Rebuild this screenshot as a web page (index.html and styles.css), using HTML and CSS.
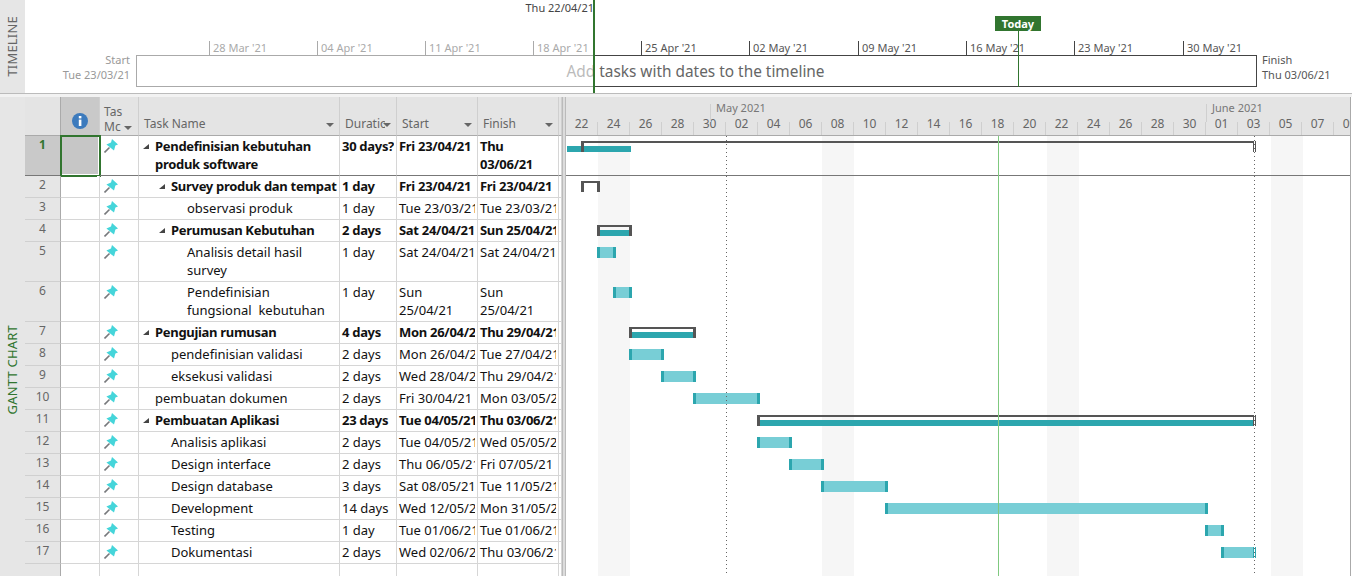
FILE: index.html
```html
<!DOCTYPE html>
<html lang="en">
<head>
    <meta charset="UTF-8">
    <meta name="viewport" content="width=device-width, initial-scale=1.0">
    <title>Gantt Chart</title>
    <link rel="stylesheet" href="styles.css">
</head>
<body>
    <svg class="defs" width="0" height="0">
        <symbol id="pin" viewBox="0 0 14 14">
            <path d="M0.5 13.5 L5.5 8.5" stroke="#77797c" stroke-width="1.6" fill="none"/>
            <path d="M8 0 L14 5.4 L11.4 6.6 L10 11.6 L2.4 5.6 L7 3.6 Z" fill="#45d5da"/>
        </symbol>
    </svg>

    <div class="app">
        <section class="timeline">
            <div class="side-label"><span>TIMELINE</span></div>
            <div class="timeline-view">
                <div class="timeline-row">
                    <div class="range-label start">Start<br>Tue 23/03/21</div>
                    <div class="timeline-box">
                        <span class="hint"><span class="hint-past">Add</span> tasks with dates to the timeline</span>
                    </div>
                    <div class="range-label">Finish<br>Thu 03/06/21</div>
                </div>

                <span class="tick past" style="left:184px">28 Mar '21</span>
                <span class="tick past" style="left:292px">04 Apr '21</span>
                <span class="tick past" style="left:400px">11 Apr '21</span>
                <span class="tick past" style="left:508px">18 Apr '21</span>
                <span class="tick" style="left:616px">25 Apr '21</span>
                <span class="tick" style="left:724px">02 May '21</span>
                <span class="tick" style="left:833px">09 May '21</span>
                <span class="tick" style="left:941px">16 May '21</span>
                <span class="tick" style="left:1049px">23 May '21</span>
                <span class="tick" style="left:1158px">30 May '21</span>

                <div class="past-box"></div>
                <div class="current-line"></div>
                <span class="current-date">Thu 22/04/21</span>
                <div class="today-line"></div>
                <span class="today-flag">Today</span>
            </div>
        </section>

        <div class="divider"></div>

        <section class="gantt">
            <div class="side-label green"><span>GANTT CHART</span></div>

            <table class="sheet">
                <colgroup>
                    <col class="c-num"><col class="c-ind"><col class="c-mode"><col class="c-name">
                    <col class="c-dur"><col class="c-date"><col class="c-date"><col class="c-pad">
                </colgroup>
                <thead>
                    <tr>
                        <th class="num"></th>
                        <th class="ind">
                            <svg class="info" width="16" height="16" viewBox="0 0 16 16">
                                <circle cx="8" cy="8" r="8" fill="#3d7bbd"/>
                                <rect x="6.8" y="3" width="2.6" height="2.4" fill="#fff"/>
                                <rect x="6.8" y="6.6" width="2.6" height="6.4" fill="#fff"/>
                            </svg>
                        </th>
                        <th class="mode">Tas<br><span class="with-arrow">Mc</span></th>
                        <th class="drop">Task Name</th>
                        <th class="drop short"><span class="clip">Duration</span></th>
                        <th class="drop">Start</th>
                        <th class="drop">Finish</th>
                        <th></th>
                    </tr>
                </thead>
                <tbody>
                    <tr class="tall selected">
                        <td class="num">1</td><td class="active"></td><td><svg class="pin"><use href="#pin"/></svg></td>
                        <td class="name l1 sum">Pendefinisian kebutuhan<br>produk software</td>
                        <td class="b">30 days?</td><td class="b">Fri 23/04/21</td><td class="b">Thu<br>03/06/21</td><td></td>
                    </tr>
                    <tr>
                        <td class="num">2</td><td></td><td><svg class="pin"><use href="#pin"/></svg></td>
                        <td class="name l2 sum">Survey produk dan tempat</td>
                        <td class="b">1 day</td><td class="b">Fri 23/04/21</td><td class="b">Fri 23/04/21</td><td></td>
                    </tr>
                    <tr>
                        <td class="num">3</td><td></td><td><svg class="pin"><use href="#pin"/></svg></td>
                        <td class="name l3">observasi produk</td>
                        <td>1 day</td><td>Tue 23/03/21</td><td>Tue 23/03/21</td><td></td>
                    </tr>
                    <tr>
                        <td class="num">4</td><td></td><td><svg class="pin"><use href="#pin"/></svg></td>
                        <td class="name l2 sum">Perumusan Kebutuhan</td>
                        <td class="b">2 days</td><td class="b">Sat 24/04/21</td><td class="b">Sun 25/04/21</td><td></td>
                    </tr>
                    <tr class="tall">
                        <td class="num">5</td><td></td><td><svg class="pin"><use href="#pin"/></svg></td>
                        <td class="name l3">Analisis detail hasil<br>survey</td>
                        <td>1 day</td><td>Sat 24/04/21</td><td>Sat 24/04/21</td><td></td>
                    </tr>
                    <tr class="tall">
                        <td class="num">6</td><td></td><td><svg class="pin"><use href="#pin"/></svg></td>
                        <td class="name l3">Pendefinisian<br>fungsional&nbsp; kebutuhan</td>
                        <td>1 day</td><td>Sun<br>25/04/21</td><td>Sun<br>25/04/21</td><td></td>
                    </tr>
                    <tr>
                        <td class="num">7</td><td></td><td><svg class="pin"><use href="#pin"/></svg></td>
                        <td class="name l1 sum">Pengujian rumusan</td>
                        <td class="b">4 days</td><td class="b">Mon 26/04/21</td><td class="b">Thu 29/04/21</td><td></td>
                    </tr>
                    <tr>
                        <td class="num">8</td><td></td><td><svg class="pin"><use href="#pin"/></svg></td>
                        <td class="name l2">pendefinisian validasi</td>
                        <td>2 days</td><td>Mon 26/04/21</td><td>Tue 27/04/21</td><td></td>
                    </tr>
                    <tr>
                        <td class="num">9</td><td></td><td><svg class="pin"><use href="#pin"/></svg></td>
                        <td class="name l2">eksekusi validasi</td>
                        <td>2 days</td><td>Wed 28/04/21</td><td>Thu 29/04/21</td><td></td>
                    </tr>
                    <tr>
                        <td class="num">10</td><td></td><td><svg class="pin"><use href="#pin"/></svg></td>
                        <td class="name l1">pembuatan dokumen</td>
                        <td>2 days</td><td>Fri 30/04/21</td><td>Mon 03/05/21</td><td></td>
                    </tr>
                    <tr>
                        <td class="num">11</td><td></td><td><svg class="pin"><use href="#pin"/></svg></td>
                        <td class="name l1 sum">Pembuatan Aplikasi</td>
                        <td class="b">23 days</td><td class="b">Tue 04/05/21</td><td class="b">Thu 03/06/21</td><td></td>
                    </tr>
                    <tr>
                        <td class="num">12</td><td></td><td><svg class="pin"><use href="#pin"/></svg></td>
                        <td class="name l2">Analisis aplikasi</td>
                        <td>2 days</td><td>Tue 04/05/21</td><td>Wed 05/05/21</td><td></td>
                    </tr>
                    <tr>
                        <td class="num">13</td><td></td><td><svg class="pin"><use href="#pin"/></svg></td>
                        <td class="name l2">Design interface</td>
                        <td>2 days</td><td>Thu 06/05/21</td><td>Fri 07/05/21</td><td></td>
                    </tr>
                    <tr>
                        <td class="num">14</td><td></td><td><svg class="pin"><use href="#pin"/></svg></td>
                        <td class="name l2">Design database</td>
                        <td>3 days</td><td>Sat 08/05/21</td><td>Tue 11/05/21</td><td></td>
                    </tr>
                    <tr>
                        <td class="num">15</td><td></td><td><svg class="pin"><use href="#pin"/></svg></td>
                        <td class="name l2">Development</td>
                        <td>14 days</td><td>Wed 12/05/21</td><td>Mon 31/05/21</td><td></td>
                    </tr>
                    <tr>
                        <td class="num">16</td><td></td><td><svg class="pin"><use href="#pin"/></svg></td>
                        <td class="name l2">Testing</td>
                        <td>1 day</td><td>Tue 01/06/21</td><td>Tue 01/06/21</td><td></td>
                    </tr>
                    <tr>
                        <td class="num">17</td><td></td><td><svg class="pin"><use href="#pin"/></svg></td>
                        <td class="name l2">Dokumentasi</td>
                        <td>2 days</td><td>Wed 02/06/21</td><td>Thu 03/06/21</td><td></td>
                    </tr>
                    <tr>
                        <td class="num"></td><td></td><td></td><td></td><td></td><td></td><td></td><td></td>
                    </tr>
                </tbody>
            </table>

            <div class="splitter"></div>

            <div class="chart">
                <div class="chart-head">
                    <div class="months">
                        <span class="month" style="left:144px">May 2021</span>
                        <span class="month" style="left:640px">June 2021</span>
                    </div>
                    <div class="days">
                        <span>22</span><span>24</span><span>26</span><span>28</span><span>30</span>
                        <span>02</span><span>04</span><span>06</span><span>08</span><span>10</span>
                        <span>12</span><span>14</span><span>16</span><span>18</span><span>20</span>
                        <span>22</span><span>24</span><span>26</span><span>28</span><span>30</span>
                        <span>01</span><span>03</span><span>05</span><span>07</span><span>09</span>
                    </div>
                </div>

                <div class="chart-body">
                    <div class="weekend" style="left:32px"></div>
                    <div class="weekend" style="left:256px"></div>
                    <div class="weekend" style="left:481px"></div>
                    <div class="weekend" style="left:705px"></div>
                    <div class="row-line"></div>

                    <!-- left/top/width are px from the dates and row heights -->
                    <div class="rollup" style="left:1px;top:10px;width:64px"></div>
                    <div class="bracket" style="left:15px;top:5px;width:675px"></div>
                    <div class="bracket" style="left:15px;top:45px;width:19px"></div>
                    <div class="bracket filled" style="left:31px;top:89px;width:35px"></div>
                    <div class="bar" style="left:31px;top:111px;width:19px"></div>
                    <div class="bar" style="left:47px;top:151px;width:19px"></div>
                    <div class="bracket filled" style="left:63px;top:191px;width:67px"></div>
                    <div class="bar" style="left:63px;top:213px;width:35px"></div>
                    <div class="bar" style="left:95px;top:235px;width:35px"></div>
                    <div class="bar" style="left:127px;top:257px;width:67px"></div>
                    <div class="bracket filled" style="left:191px;top:279px;width:499px"></div>
                    <div class="bar" style="left:191px;top:301px;width:35px"></div>
                    <div class="bar" style="left:223px;top:323px;width:35px"></div>
                    <div class="bar" style="left:255px;top:345px;width:67px"></div>
                    <div class="bar" style="left:319px;top:367px;width:323px"></div>
                    <div class="bar" style="left:639px;top:389px;width:19px"></div>
                    <div class="bar" style="left:655px;top:411px;width:35px"></div>

                    <div class="cut" style="top:5px"></div>
                    <div class="cut" style="top:279px"></div>
                    <div class="cut" style="top:411px"></div>

                    <div class="dotted" style="left:160px"></div>
                    <div class="dotted" style="left:688px"></div>
                    <div class="today-mark"></div>
                </div>
            </div>
        </section>
    </div>
</body>
</html>
```

FILE: styles.css
```css
* {
    box-sizing: border-box;
}

body {
    margin: 0;
    font-family: "Noto Sans", Arial, sans-serif;
    font-size: 13px;
    color: #111;
    background: #fff;
}

.defs {
    position: absolute;
}

.app {
    width: 1352px;
    height: 576px;
    overflow: hidden;
}

/* side labels */
.side-label {
    flex: none;
    width: 25px;
    background: #e6e6e6;
    color: #666;
    display: flex;
    align-items: center;
    justify-content: center;
}

.side-label span {
    writing-mode: vertical-rl;
    transform: rotate(180deg);
    font-size: 13px;
    line-height: 25px;
    letter-spacing: 0.2px;
}

.side-label.green {
    color: #31752f;
    padding-top: 67px;
}

/* timeline */
.timeline {
    display: flex;
    height: 93px;
}

.timeline-view {
    position: relative;
    flex: 1;
    min-width: 0;
    padding-top: 55px;
}

.timeline-row {
    display: flex;
    align-items: stretch;
    height: 32px;
}

.range-label {
    flex: none;
    width: 90px;
    margin: -3px 0 0 5px;
    font-size: 11px;
    line-height: 15px;
    color: #555;
    white-space: nowrap;
}

.range-label.start {
    width: 105px;
    margin: -3px 6px 0 0;
    text-align: right;
    color: #999;
}

.timeline-box {
    flex: none;
    width: 1121px;
    border: 1px solid #444;
    display: flex;
    align-items: center;
    justify-content: center;
    font-size: 15.4px;
    color: #666;
}

.hint {
    margin-left: -2px;
}

.hint-past {
    color: #bbb;
}

.past-box {
    position: absolute;
    left: 111px;
    top: 55px;
    width: 458px;
    height: 32px;
    border: 1px solid #aaa;
    border-right: 0;
}

.tick {
    position: absolute;
    top: 41px;
    height: 14px;
    border-left: 1px solid #444;
    padding-left: 3px;
    font-size: 11px;
    line-height: 13px;
    color: #555;
    white-space: nowrap;
}

.tick.past {
    border-left-color: #aaa;
    color: #aaa;
}

.current-line {
    position: absolute;
    left: 568px;
    top: 0;
    width: 2px;
    height: 93px;
    background: #31752f;
}

.current-date {
    position: absolute;
    right: 758px;
    top: 0;
    font-size: 11px;
    line-height: 16px;
    color: #444;
    white-space: nowrap;
}

.today-line {
    position: absolute;
    left: 993px;
    top: 31px;
    width: 1px;
    height: 56px;
    background: #31752f;
}

.today-flag {
    position: absolute;
    left: 970px;
    top: 16px;
    width: 46px;
    height: 15px;
    background: #31752f;
    color: #fff;
    font-size: 11px;
    font-weight: bold;
    line-height: 15px;
    text-align: center;
}

.divider {
    height: 4px;
    border-top: 1px solid #bbb;
    background: #f2f2f2;
}

/* gantt view */
.gantt {
    display: flex;
    height: 479px;
}

.sheet {
    flex: none;
    width: 537px;
    table-layout: fixed;
    border-collapse: separate;
    border-spacing: 0;
    align-self: flex-start;
}

.c-num { width: 36px; }
.c-ind { width: 39px; }
.c-mode { width: 39px; }
.c-name { width: 201px; }
.c-dur { width: 57px; }
.c-date { width: 81px; }
.c-pad { width: 3px; }

.sheet th {
    height: 39px;
    padding: 0 5px 2px;
    background: #e4e4e4;
    border-right: 1px solid #cfcfcf;
    border-bottom: 1px solid #aaa;
    font-size: 12px;
    font-weight: normal;
    line-height: 18px;
    color: #666;
    text-align: left;
    vertical-align: bottom;
    white-space: nowrap;
    overflow: hidden;
    position: relative;
}

.sheet th.num {
    border-right-color: #aaa;
    border-bottom-color: #aaa;
}

.sheet th.ind {
    background: #c9c9c9;
    padding: 0 0 6px;
    text-align: center;
}

.info {
    display: block;
    margin: 0 auto;
}

.sheet th.mode {
    padding: 0 0 1px 4px;
    line-height: 15px;
}

.with-arrow::after,
.drop::after {
    content: "";
    border-left: 4px solid transparent;
    border-right: 4px solid transparent;
    border-top: 4px solid #666;
}

.with-arrow::after {
    display: inline-block;
    margin-left: 3px;
    vertical-align: 1px;
}

.drop::after {
    position: absolute;
    right: 5px;
    bottom: 8px;
}

.clip {
    display: block;
    width: 40px;
    overflow: hidden;
}

.sheet td {
    position: relative;
    height: 22px;
    padding: 1px 2px 0;
    border-right: 1px solid #d6d6d6;
    border-bottom: 1px solid #d6d6d6;
    line-height: 18px;
    vertical-align: top;
    white-space: nowrap;
    overflow: hidden;
}

/* long values stop a little before the column line */
.sheet td:not(.num):not(.active)::after {
    content: "";
    position: absolute;
    top: 0;
    right: 0;
    bottom: 0;
    width: 2px;
    background: #fff;
}

.sheet tr.tall td {
    height: 40px;
}

.sheet td.num {
    background: #e6e6e6;
    border-right-color: #aaa;
    border-bottom-color: #d0d0d0;
    color: #666;
    font-size: 12px;
    text-align: center;
    padding: 0;
}

.sheet tr.selected td {
    border-bottom-color: #777;
}

.sheet tr.selected td.num {
    background: #c9c9c9;
    color: #31752f;
    font-weight: bold;
}

.sheet td.active {
    background: #c6c6c6;
    overflow: visible;
    outline: 2px solid #31752f;
    outline-offset: -1px;
    box-shadow: inset 0 0 0 1px #fff;
}

.pin {
    display: block;
    width: 14px;
    height: 14px;
    margin: 2px 0 0 2px;
}

.sheet td.b {
    font-weight: bold;
    letter-spacing: -0.3px;
}

.name.l1 { padding-left: 16px; }
.name.l2 { padding-left: 32px; }
.name.l3 { padding-left: 48px; }

.name.sum {
    font-weight: bold;
    letter-spacing: -0.3px;
}

.name.sum::before {
    content: "";
    display: inline-block;
    width: 6px;
    height: 5px;
    margin: 0 6px 2px -12px;
    background: #444;
    clip-path: polygon(100% 0, 100% 100%, 0 100%);
}

.splitter {
    flex: none;
    width: 4px;
    background: #dcdcdc;
    border-left: 1px solid #bbb;
    border-right: 1px solid #bbb;
}

/* chart */
.chart {
    width: 785px;
    flex: none;
    border-right: 1px solid #aaa;
}

.chart-head {
    height: 39px;
    background: #e4e4e4;
    border-bottom: 1px solid #aaa;
    color: #666;
    font-size: 12px;
    overflow: hidden;
}

.months {
    position: relative;
    height: 25px;
}

.month {
    position: absolute;
    top: 7px;
    height: 18px;
    padding-left: 5px;
    border-left: 1px solid #cfcfcf;
    font-size: 11px;
    line-height: 7px;
    color: #777;
    white-space: nowrap;
}

.days {
    display: flex;
    height: 13px;
}

.days span {
    flex: none;
    width: 32px;
    height: 13px;
    line-height: 4px;
    text-align: center;
    border-right: 1px solid #cfcfcf;
}

.chart-body {
    position: relative;
    height: 440px;
    overflow: hidden;
}

.weekend {
    position: absolute;
    top: 0;
    bottom: 0;
    width: 32px;
    background: #f6f6f6;
}

.row-line {
    position: absolute;
    left: 0;
    right: 0;
    top: 39px;
    height: 1px;
    background: #777;
}

.bar,
.bracket,
.rollup {
    position: absolute;
}

.bar {
    height: 11px;
    background: #78ced6;
    border-left: 3px solid #2ca6ae;
    border-right: 3px solid #2ca6ae;
}

.bracket {
    height: 11px;
    border: 3px solid #555;
    border-top-width: 2px;
    border-bottom: 0;
}

.bracket.filled::after {
    content: "";
    position: absolute;
    left: 0;
    right: 0;
    bottom: 0;
    height: 6px;
    background: #2ca6ae;
}

.rollup {
    height: 6px;
    background: #2ca6ae;
}

.cut {
    position: absolute;
    left: 688px;
    width: 1px;
    height: 11px;
    background: #fff;
}

.dotted {
    position: absolute;
    top: 0;
    bottom: 0;
    width: 1px;
    background: repeating-linear-gradient(to bottom, #666 0, #666 1px, transparent 1px, transparent 4px);
}

.today-mark {
    position: absolute;
    left: 432px;
    top: 0;
    bottom: 0;
    width: 1px;
    background: #7fc97f;
}
```
